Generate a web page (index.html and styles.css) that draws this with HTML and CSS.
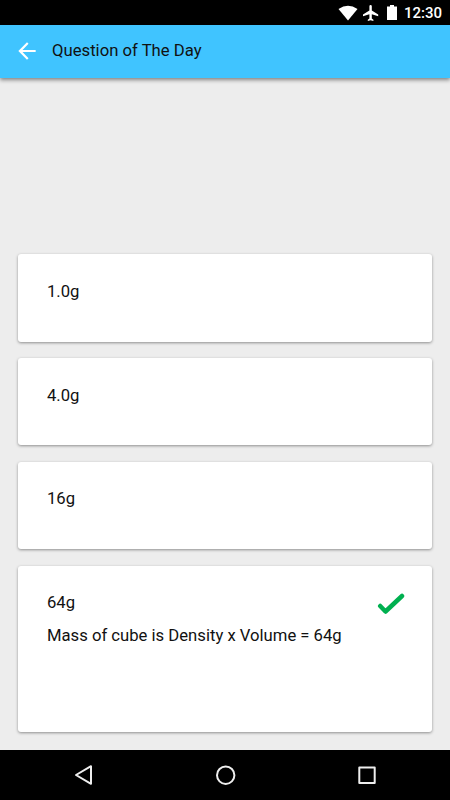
FILE: index.html
```html
<!DOCTYPE html>
<html lang="en">
<head>
<meta charset="utf-8">
<title>Question of The Day</title>
<link rel="stylesheet" href="styles.css">
</head>
<body>
<div class="status">
  <svg class="wifi" viewBox="0 0 20 16"><path d="M0.500 4Q10-2.500 19.500 4L10 15.500Z"/></svg>
  <svg class="plane" viewBox="2 2 20 20"><path d="M21 16v-2l-8-5V3.500a1.500 1.500 0 0 0-3 0V9l-8 5v2l8-2.500V19l-2 1.500V22l3.500-1 3.500 1v-1.500L13 19v-5.500z"/></svg>
  <svg class="battery" viewBox="0 0 10 16"><path d="M3 0h4v1.500h3V15H0V1.500h3z"/></svg>
  <span class="time">12:30</span>
</div>
<header class="appbar">
  <svg class="back" viewBox="0 0 24 24"><path d="M20 11H7.830l5.590-5.590L12 4l-8 8 8 8 1.410-1.410L7.830 13H20z"/></svg>
  <h1 class="title">Question of The Day</h1>
</header>
<main class="answers">
  <section class="card"><p>1.0g</p></section>
  <section class="card"><p>4.0g</p></section>
  <section class="card"><p>16g</p></section>
  <section class="card correct">
    <div><p>64g</p><p>Mass of cube is Density x Volume = 64g</p></div>
    <svg class="check" viewBox="0 0 28 22"><path d="M3.200 13l5.300 5.500L25 3"/></svg>
  </section>
</main>
<nav class="navbar">
  <svg viewBox="0 0 24 24"><path d="M19 3.200v17.600L4 12z"/></svg>
  <svg viewBox="0 0 24 24"><circle cx="11.700" cy="12.200" r="8.700"/></svg>
  <svg viewBox="0 0 24 24"><path d="M4.300 4.500h15.400v15.400H4.300z"/></svg>
</nav>
</body>
</html>
```
FILE: styles.css
```css
* { box-sizing: border-box; }
body { margin: 0; width: 450px; height: 800px; display: flex; flex-direction: column; background: #ededed; font-family: Roboto, sans-serif; color: #111; overflow: hidden; }
svg { display: block; flex: none; }
h1, p { margin: 0; font-weight: 400; }
.status { height: 25px; background: #000; display: flex; align-items: center; justify-content: flex-end; padding-right: 8px; color: #fff; fill: #fff; }
.wifi { width: 20px; height: 16px; }
.plane { width: 16px; height: 16px; margin-left: 5px; }
.battery { width: 10px; height: 16px; margin-left: 8px; }
.time { font-size: 15px; font-weight: 500; line-height: 24px; margin-left: 7px; }
.appbar { height: 52.500px; background: #40c4ff; display: flex; align-items: center; padding-left: 14px; box-shadow: 0 2px 4px rgba(0,0,0,.45); }
.back { width: 26px; height: 26px; fill: #fff; }
.title { font-size: 16.700px; line-height: 20px; margin: -1px 0 0 12px; }
.answers { flex: 1; display: flex; flex-direction: column; justify-content: flex-end; gap: 16.500px; padding: 0 18px 18px; }
.card { height: 87.250px; flex: none; padding: 27.600px 29px; background: #fff; border-radius: 3px; box-shadow: 0 1px 3px rgba(0,0,0,.4); font-size: 16.670px; line-height: 20px; }
.correct { height: 166.500px; padding-top: 27px; display: flex; justify-content: space-between; }
.correct p + p { margin-top: 13px; }
.check { width: 28px; height: 22px; margin: 0.500px -2px 0 0; fill: none; stroke: #00b050; stroke-width: 4.500; stroke-linecap: round; stroke-linejoin: round; }
.navbar { height: 50px; background: #000; display: flex; align-items: center; justify-content: space-between; padding: 0 71px 0 72px; }
.navbar svg { width: 24px; height: 24px; fill: none; stroke: #eee; stroke-width: 2; stroke-linejoin: round; }
```
